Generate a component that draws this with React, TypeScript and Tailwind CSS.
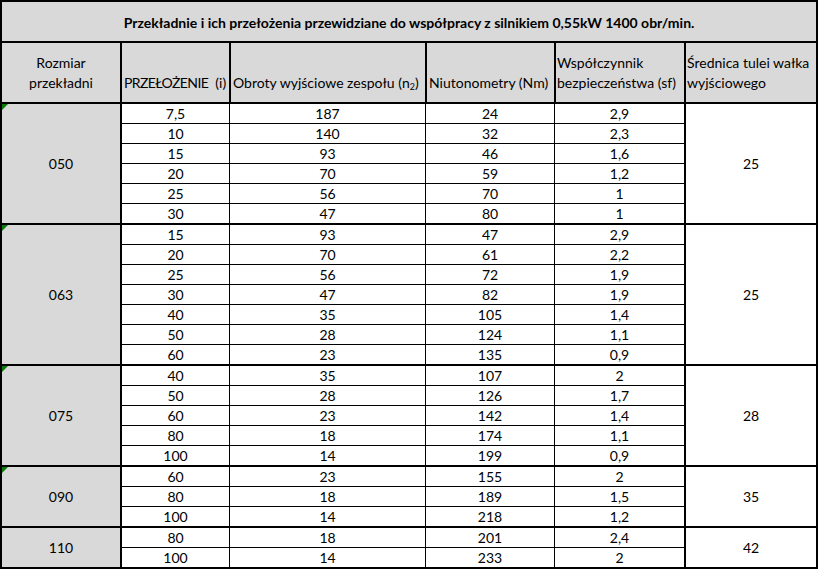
import React from 'react'

type Group = {
  size: string
  shaft: string
  marker: boolean
  rows: string[][]
}

const groups: Group[] = [
  {
    size: '050',
    shaft: '25',
    marker: true,
    rows: [
      ['7,5', '187', '24', '2,9'],
      ['10', '140', '32', '2,3'],
      ['15', '93', '46', '1,6'],
      ['20', '70', '59', '1,2'],
      ['25', '56', '70', '1'],
      ['30', '47', '80', '1'],
    ],
  },
  {
    size: '063',
    shaft: '25',
    marker: true,
    rows: [
      ['15', '93', '47', '2,9'],
      ['20', '70', '61', '2,2'],
      ['25', '56', '72', '1,9'],
      ['30', '47', '82', '1,9'],
      ['40', '35', '105', '1,4'],
      ['50', '28', '124', '1,1'],
      ['60', '23', '135', '0,9'],
    ],
  },
  {
    size: '075',
    shaft: '28',
    marker: true,
    rows: [
      ['40', '35', '107', '2'],
      ['50', '28', '126', '1,7'],
      ['60', '23', '142', '1,4'],
      ['80', '18', '174', '1,1'],
      ['100', '14', '199', '0,9'],
    ],
  },
  {
    size: '090',
    shaft: '35',
    marker: true,
    rows: [
      ['60', '23', '155', '2'],
      ['80', '18', '189', '1,5'],
      ['100', '14', '218', '1,2'],
    ],
  },
  {
    size: '110',
    shaft: '42',
    marker: false,
    rows: [
      ['80', '18', '201', '2,4'],
      ['100', '14', '233', '2'],
    ],
  },
]

const GroupBlock = ({ group }: { group: Group }) => (
  <div className="flex border-t-2 border-black first:border-t-0">
    {/* rozmiar */}
    <div className="relative flex w-[120px] items-center justify-center border-r-2 border-black bg-[#d9d9d9]">
      {group.marker && (
        <span className="absolute left-0 top-0 h-0 w-0 border-r-[6px] border-t-[6px] border-r-transparent border-t-[#0a7a0a]" />
      )}
      {group.size}
    </div>

    {/* wiersze */}
    <div className="flex w-[562px] flex-col">
      {group.rows.map((row, i) => (
        <div
          key={i}
          className="flex h-[20px] border-t border-black first:h-[19px] first:border-t-0"
        >
          <div className="flex w-[108px] items-center justify-center border-r border-black">{row[0]}</div>
          <div className="flex w-[196px] items-center justify-center border-r border-black">{row[1]}</div>
          <div className="flex w-[129px] items-center justify-center border-r border-black">{row[2]}</div>
          <div className="flex flex-1 items-center justify-center">{row[3]}</div>
        </div>
      ))}
    </div>

    {/* srednica */}
    <div className="flex w-[132px] items-center justify-center border-l-2 border-black">
      {group.shaft}
    </div>
  </div>
)

export default function App() {
  return (
    <div className="h-[569px] w-[818px] bg-white">
      <div className="border-2 border-black font-['Lato','Noto_Sans',sans-serif] text-[14px] leading-none text-black">
        {/* TITLE */}
        <div className="flex h-[41px] items-center justify-center border-b-2 border-black bg-[#d9d9d9] pt-[2px] font-bold">
          Przekładnie i ich przełożenia przewidziane do współpracy z silnikiem 0,55kW 1400 obr/min.
        </div>

        {/* HEADER */}
        <div className="flex h-[61px] border-b-2 border-black bg-[#d9d9d9] leading-[20px]">
          <div className="flex w-[120px] flex-col items-center justify-end border-r-2 border-black pb-[9px] text-center">
            <span>Rozmiar</span>
            <span>przekładni</span>
          </div>
          <div className="flex w-[109px] items-end overflow-hidden whitespace-pre border-r-2 border-black pb-[9px] pl-[2px]">
            <span className="tracking-[-0.6px]">PRZEŁOŻENIE</span>
            <span>  (i)</span>
          </div>
          <div className="flex w-[196px] items-end whitespace-nowrap border-r-2 border-black pb-[9px] pl-[2px]">
            <span>
              Obroty wyjściowe zespołu (n<sub className="text-[9px]">2</sub>)
            </span>
          </div>
          <div className="flex w-[129px] items-end whitespace-nowrap border-r-2 border-black pb-[9px] pl-[2px]">
            Niutonometry (Nm)
          </div>
          <div className="flex w-[130px] flex-col justify-end whitespace-nowrap border-r-2 border-black pb-[9px] pl-[1px]">
            <span>Współczynnik</span>
            <span>bezpieczeństwa (sf)</span>
          </div>
          <div className="flex flex-1 flex-col justify-end whitespace-nowrap pb-[9px] pl-[1px]">
            <span>Średnica tulei wałka</span>
            <span>wyjściowego</span>
          </div>
        </div>

        {/* DATA */}
        <div>
          {groups.map((g) => (
            <GroupBlock key={g.size} group={g} />
          ))}
        </div>
      </div>
    </div>
  )
}
